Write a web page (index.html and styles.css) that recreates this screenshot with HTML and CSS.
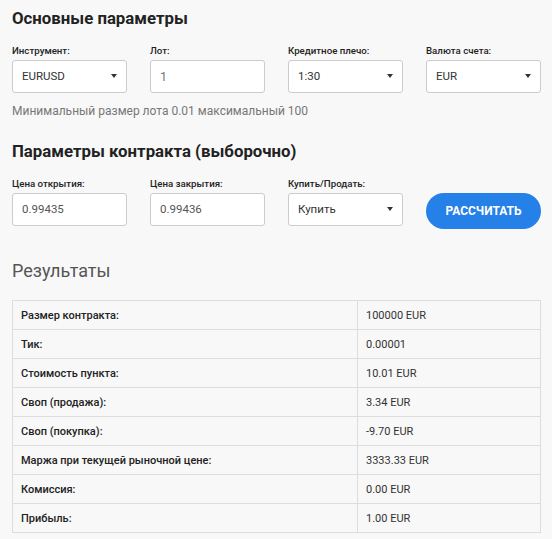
FILE: index.html
```html
<!DOCTYPE html>
<html>
   <head>
      <meta charset="UTF-8">
      <title>Калькулятор трейдера</title>
      <link rel="stylesheet" href="styles.css">
   </head>
   <body>
      <div class="calc">
         <h2 class="calc-title">Основные параметры</h2>

         <div class="fields">
            <div class="field">
               <label>Инструмент:</label>
               <div class="select">EURUSD</div>
            </div>
            <div class="field">
               <label>Лот:</label>
               <div class="input input-muted">1</div>
            </div>
            <div class="field">
               <label>Кредитное плечо:</label>
               <div class="select">1:30</div>
            </div>
            <div class="field">
               <label>Валюта счета:</label>
               <div class="select">EUR</div>
            </div>
         </div>

         <p class="hint">Минимальный размер лота 0.01 максимальный 100</p>

         <h2 class="calc-title">Параметры контракта (выборочно)</h2>

         <div class="fields">
            <div class="field">
               <label>Цена открытия:</label>
               <div class="input">0.99435</div>
            </div>
            <div class="field">
               <label>Цена закрытия:</label>
               <div class="input">0.99436</div>
            </div>
            <div class="field">
               <label>Купить/Продать:</label>
               <div class="select">Купить</div>
            </div>
            <div class="field field-button">
               <button class="button-calc">Рассчитать</button>
            </div>
         </div>

         <h3 class="results-title">Результаты</h3>

         <table class="results">
            <tr><th>Размер контракта:</th><td>100000 EUR</td></tr>
            <tr><th>Тик:</th><td>0.00001</td></tr>
            <tr><th>Стоимость пункта:</th><td>10.01 EUR</td></tr>
            <tr><th>Своп (продажа):</th><td>3.34 EUR</td></tr>
            <tr><th>Своп (покупка):</th><td>-9.70 EUR</td></tr>
            <tr><th>Маржа при текущей рыночной цене:</th><td>3333.33 EUR</td></tr>
            <tr><th>Комиссия:</th><td>0.00 EUR</td></tr>
            <tr><th>Прибыль:</th><td>1.00 EUR</td></tr>
         </table>
      </div>
   </body>
</html>
```

FILE: styles.css
```css
*
{
   box-sizing: border-box;
}

body
{
   margin: 0;
   background: #f8f8f8;
   font-family: Roboto, "Liberation Sans", sans-serif;
   color: #333333;
}

.calc
{
   padding: 7px 11px 0 12px;
}

.calc-title
{
   margin: 0;
   font-size: 16.8px;
   font-weight: 700;
   line-height: 22px;
   color: #222222;
}

.fields
{
   display: grid;
   grid-template-columns: repeat(4, 115px);
   column-gap: 23px;
   margin-top: 15px;
}

.field label
{
   display: block;
   font-size: 9.7px;
   font-weight: 500;
   line-height: 14px;
   margin-bottom: 2px;
   color: #222222;
}

.select,
.input
{
   position: relative;
   height: 33px;
   padding: 0 9px;
   background: #ffffff;
   border: 1px solid #cccccc;
   border-radius: 3px;
   font-size: 11.5px;
   line-height: 31px;
   color: #333333;
}

.input
{
   font-size: 11.5px;
   color: #555555;
}

.input-muted
{
   font-size: 12.5px;
   color: #777777;
}

.select::after
{
   content: "";
   position: absolute;
   right: 9px;
   top: 13px;
   border-left: 3.5px solid transparent;
   border-right: 3.5px solid transparent;
   border-top: 4px solid #333333;
}

.field-button
{
   padding-top: 16px;
}

.button-calc
{
   width: 115px;
   height: 36px;
   border: none;
   border-radius: 18px;
   background: #2580e8;
   color: #ffffff;
   font-family: inherit;
   font-size: 12px;
   font-weight: 700;
   text-transform: uppercase;
}

.hint
{
   margin: 10px 0 21px;
   font-size: 12px;
   line-height: 16px;
   color: #777777;
}

.results-title
{
   margin: 30px 0 17px;
   font-size: 18px;
   font-weight: 400;
   line-height: 24px;
   color: #555555;
}

.results
{
   width: 529px;
   border-collapse: collapse;
   font-size: 11px;
}

.results th,
.results td
{
   height: 29px;
   padding: 0 8px;
   border: 1px solid #dddddd;
   text-align: left;
}

.results th
{
   width: 345px;
   font-weight: 500;
   color: #222222;
}

.results td
{
   color: #333333;
}
```
